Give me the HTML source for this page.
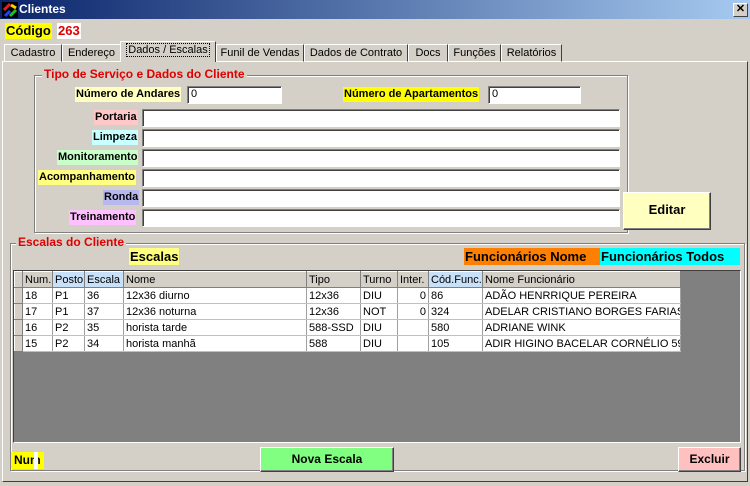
<!DOCTYPE html>
<html><head><meta charset="utf-8"><style>
*{box-sizing:border-box}
body{margin:0;width:750px;height:486px;background:#d4d0c8;font-family:"Liberation Sans",Arial,sans-serif;font-size:11px;position:relative;overflow:hidden}
.a{position:absolute}
.title{left:0;top:0;width:750px;height:19px;background:linear-gradient(90deg,#0a246a,#a6caf0);color:#fff;font-weight:bold;font-size:12px;line-height:19px;padding-left:19px}
.close{left:733px;top:3px;width:15px;height:14px;background:#d4d0c8;border:1px solid;border-color:#fff #404040 #404040 #fff;color:#000;font-size:11px;line-height:11px;text-align:center;font-weight:bold}
.tab{top:44px;height:18px;border:1px solid;border-color:#fff #404040 transparent #fff;line-height:16px;text-align:center;font-size:11px}
.sel{top:41px;height:21px;background:#d4d0c8;border-bottom:none;z-index:2}
.page{left:2px;top:61px;width:746px;height:421px;border:1px solid;border-color:#fff #404040 #404040 #fff}
.grp{border:1px solid #808080;box-shadow:1px 1px 0 #fff inset,1px 1px 0 #fff}
.gt{background:#d4d0c8;color:#e00000;font-weight:bold;font-size:12px;padding:0 2px;line-height:13px}
.lb{font-weight:bold;font-size:11px;line-height:15px;text-align:right;padding:0 1px}
.in{background:#fff;border:1px solid;border-color:#808080 #fff #fff #808080;box-shadow:inset 1px 1px 0 #404040;height:18px;line-height:15px;padding-left:3px}
.btn{border:1px solid;border-color:#fff #404040 #404040 #fff;box-shadow:inset -1px -1px 0 #808080;font-weight:bold;text-align:center}
table{border-collapse:collapse;font-size:11px}
td{border-right:1px solid #a0a0a0;border-bottom:1px solid #c0c0c0;height:16px;padding:0 2px;white-space:nowrap;overflow:hidden;background:#fff}
th{font-weight:normal;text-align:left;background:#d4d0c8;border:1px solid;border-color:#fff #808080 #808080 #fff;height:16px;padding:0 2px}
.ind{background:#d4d0c8;border:1px solid;border-color:#fff #808080 #808080 #fff;padding:0}
</style></head><body>
<div class="a title">Clientes</div>
<svg class="a" style="left:2px;top:2px" width="16" height="16"><rect width="16" height="16" fill="#000"/><path d="M2 8 L8 2" stroke="#e02020" stroke-width="3"/><path d="M8 14 L14 8" stroke="#20c020" stroke-width="3"/><path d="M3 14 L8 9" stroke="#2040ff" stroke-width="3"/><path d="M9 3 L14 6" stroke="#ffd000" stroke-width="3"/></svg>
<div class="a close">✕</div>
<div class="a" style="left:5px;top:23px;height:16px;background:#ffff00;font-weight:bold;font-size:13px;line-height:16px;padding:0 1px">Código</div>
<div class="a" style="left:57px;top:23px;height:16px;background:#fff;color:#e00000;font-weight:bold;font-size:13px;line-height:16px;padding:0 1px">263</div>
<div class="a page"></div>
<div class="a tab" style="left:4px;width:58px">Cadastro</div>
<div class="a tab" style="left:62px;width:59px">Endereço</div>
<div class="a tab sel" style="left:120px;width:96px"><span style="border:1px dotted #000;padding:0 1px">Dados / Escalas</span></div>
<div class="a tab" style="left:216px;width:88px">Funil de Vendas</div>
<div class="a tab" style="left:304px;width:104px">Dados de Contrato</div>
<div class="a tab" style="left:408px;width:40px">Docs</div>
<div class="a tab" style="left:448px;width:53px">Funções</div>
<div class="a tab" style="left:501px;width:61px">Relatórios</div>

<div class="a grp" style="left:34px;top:75px;width:594px;height:158px"></div>
<div class="a gt" style="left:42px;top:68px">Tipo de Serviço e Dados do Cliente</div>
<div class="a lb" style="left:75px;top:87px;background:#ffffc0">Número de Andares</div>
<div class="a in" style="left:187px;top:86px;width:95px">0</div>
<div class="a lb" style="left:343px;top:87px;background:#ffff00">Número de Apartamentos</div>
<div class="a in" style="left:488px;top:86px;width:93px">0</div>

<div class="a lb" style="left:94px;top:110px;background:#ffc8c8">Portaria</div>
<div class="a lb" style="left:92px;top:130px;background:#c8ffff">Limpeza</div>
<div class="a lb" style="left:57px;top:150px;background:#c8ffc8">Monitoramento</div>
<div class="a lb" style="left:38px;top:170px;background:#ffff80">Acompanhamento</div>
<div class="a lb" style="left:103px;top:190px;background:#b8b8f0">Ronda</div>
<div class="a lb" style="left:69px;top:210px;background:#ffc0ff">Treinamento</div>
<div class="a in" style="left:142px;top:109px;width:478px"></div>
<div class="a in" style="left:142px;top:129px;width:478px"></div>
<div class="a in" style="left:142px;top:149px;width:478px"></div>
<div class="a in" style="left:142px;top:169px;width:478px"></div>
<div class="a in" style="left:142px;top:189px;width:478px"></div>
<div class="a in" style="left:142px;top:209px;width:478px"></div>
<div class="a btn" style="left:623px;top:192px;width:88px;height:38px;background:#ffffc0;font-size:13px;line-height:34px">Editar</div>

<div class="a grp" style="left:10px;top:243px;width:735px;height:228px"></div>
<div class="a gt" style="left:16px;top:236px">Escalas do Cliente</div>
<div class="a" style="left:129px;top:248px;height:17px;background:#ffff80;font-weight:bold;font-size:13px;line-height:17px;padding:0 1px">Escalas</div>
<div class="a" style="left:464px;top:248px;width:136px;height:17px;background:#ff8000;font-weight:bold;font-size:13px;line-height:17px;padding-left:1px">Funcionários Nome</div>
<div class="a" style="left:600px;top:248px;width:140px;height:17px;background:#00ffff;font-weight:bold;font-size:13px;line-height:17px;padding-left:1px">Funcionários Todos</div>

<div class="a" style="left:13px;top:270px;width:728px;height:173px;background:#808080;border:1px solid;border-color:#404040 #fff #fff #404040"></div>
<table class="a" style="left:14px;top:271px;table-layout:fixed;width:666px">
<colgroup><col style="width:8px"><col style="width:30px"><col style="width:32px"><col style="width:39px"><col style="width:183px"><col style="width:54px"><col style="width:37px"><col style="width:31px"><col style="width:54px"><col style="width:198px"></colgroup>
<tr><th class="ind"></th><th>Num.</th><th style="background:#c8e0f8">Posto</th><th style="background:#c8e0f8">Escala</th><th>Nome</th><th>Tipo</th><th>Turno</th><th>Inter.</th><th style="background:#c8e0f8">Cód.Func.</th><th>Nome Funcionário</th></tr>
<tr><td class="ind"></td><td>18</td><td>P1</td><td>36</td><td>12x36 diurno</td><td>12x36</td><td>DIU</td><td style="text-align:right">0</td><td>86</td><td>ADÃO HENRRIQUE PEREIRA</td></tr>
<tr><td class="ind"></td><td>17</td><td>P1</td><td>37</td><td>12x36 noturna</td><td>12x36</td><td>NOT</td><td style="text-align:right">0</td><td>324</td><td>ADELAR CRISTIANO BORGES FARIAS</td></tr>
<tr><td class="ind"></td><td>16</td><td>P2</td><td>35</td><td>horista tarde</td><td>588-SSD</td><td>DIU</td><td></td><td>580</td><td>ADRIANE WINK</td></tr>
<tr><td class="ind"></td><td>15</td><td>P2</td><td>34</td><td>horista manhã</td><td>588</td><td>DIU</td><td></td><td>105</td><td>ADIR HIGINO BACELAR CORNÉLIO 59</td></tr>
</table>

<div class="a" style="left:11px;top:452px;height:17px;background:#ffff00;font-weight:bold;font-size:12px;line-height:17px;padding:0 3px">Num</div>
<div class="a" style="left:34px;top:452px;width:4px;height:17px;background:#fff"></div>
<div class="a btn" style="left:260px;top:447px;width:134px;height:25px;background:#80ff80;font-size:12px;line-height:22px">Nova Escala</div>
<div class="a btn" style="left:678px;top:447px;width:63px;height:25px;background:#ffc0c0;font-size:12px;line-height:22px">Excluir</div>
</body></html>
